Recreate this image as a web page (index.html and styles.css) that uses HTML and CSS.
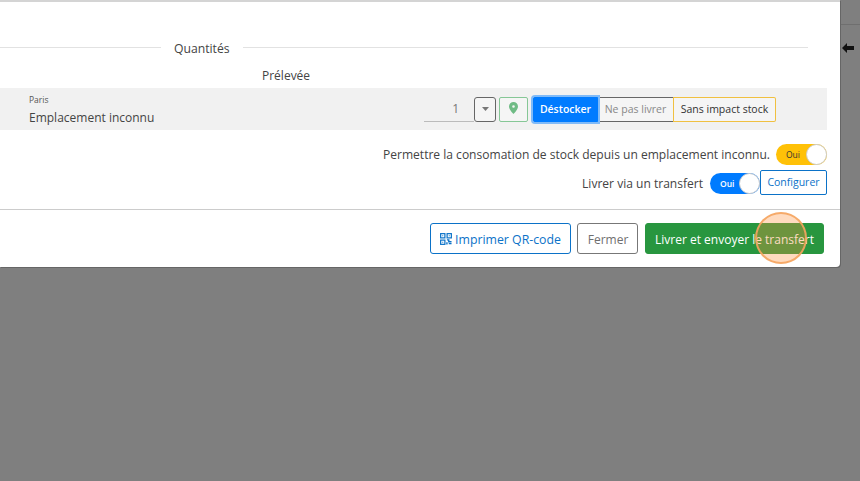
FILE: index.html
```html
<!DOCTYPE html>
<html lang="fr">
<head>
<meta charset="utf-8">
<title>Quantités</title>
<link rel="stylesheet" href="styles.css">
</head>
<body>
<div class="backdrop">
  <div class="side-band"></div>
  <svg class="back-arrow" width="12" height="10" viewBox="0 0 12 10"><path d="M0 5 5 0v3h7v4H5v3z" fill="#111"/></svg>
  <div class="modal">
    <div class="modal-body">
      <div class="divider"><span class="line short"></span><span class="divider-label">Quantités</span><span class="line"></span></div>
      <div class="col-head">Prélevée</div>
      <div class="stock-row">
        <div class="location">
          <div class="city">Paris</div>
          <div class="place">Emplacement inconnu</div>
        </div>
        <div class="controls">
          <div class="qty">1</div>
          <button class="caret-btn"><svg width="7" height="4" viewBox="0 0 7 4"><path d="M0 0h7L3.500 4z" fill="#777"/></svg></button>
          <button class="pin-btn"><svg width="9" height="12" viewBox="0 0 9 12"><path fill-rule="evenodd" d="M4.500 0A4.500 4.500 0 0 0 0 4.500C0 7.500 4.500 12 4.500 12S9 7.500 9 4.500A4.500 4.500 0 0 0 4.500 0zm0 3.200a1.300 1.300 0 1 1 0 2.600 1.300 1.300 0 0 1 0-2.600z" fill="#6fbb85"/></svg></button>
          <div class="seg">
            <button class="seg-btn seg-on">Déstocker</button>
            <button class="seg-btn seg-mid">Ne pas livrer</button>
            <button class="seg-end">Sans impact stock</button>
          </div>
        </div>
      </div>
      <div class="option option-first">
        <span>Permettre la consomation de stock depuis un emplacement inconnu.</span>
        <span class="toggle toggle-yellow"><span class="toggle-text">Oui</span><span class="knob"></span></span>
      </div>
      <div class="option option-second">
        <span>Livrer via un transfert</span>
        <span class="toggle toggle-blue"><span class="toggle-text">Oui</span><span class="knob"></span></span>
        <button class="config-btn">Configurer</button>
      </div>
    </div>
    <div class="modal-footer">
      <button class="btn btn-qr"><svg width="12" height="12" viewBox="0 0 13 13" fill="none" stroke="#0b72c8" stroke-width="1.300"><rect x=".7" y=".7" width="4.600" height="4.600"/><rect x="7.700" y=".7" width="4.600" height="4.600"/><rect x=".7" y="7.700" width="4.600" height="4.600"/><path d="M2.500 2.500h1v1h-1zM9.500 2.500h1v1h-1zM2.500 9.500h1v1h-1z" fill="#0b72c8" stroke="none"/><path d="M7.500 7.500h2v2h3M7.500 10v2.500M9.500 11.500h3" stroke-width="1.500"/></svg><span>Imprimer QR-code</span></button>
      <button class="btn btn-close">Fermer</button>
      <button class="btn btn-go">Livrer et envoyer le transfert</button>
    </div>
    <div class="click-mark"></div>
  </div>
</div>
</body>
</html>
```
FILE: styles.css
```css
* { box-sizing: border-box; }
html, body { margin: 0; height: 100%; }
body { font-family: "Open Sans", "Noto Sans", sans-serif; font-size: 12px; color: #333; overflow: hidden; }
button { font-family: inherit; padding: 0; margin: 0; cursor: pointer; }
.backdrop { position: relative; width: 860px; height: 481px; background: #7f7f7f; }
.side-band { position: absolute; left: 840px; top: 24px; width: 20px; height: 1px; background: #6f6f6f; }
.back-arrow { position: absolute; left: 842px; top: 43px; }
.modal { position: relative; width: 840px; height: 267px; background: #fff; border-top: 2px solid #d4d4d4; border-radius: 0 0 4px 0; box-shadow: 1px 1px 0 #666; display: flex; flex-direction: column; }
.modal-body { height: 207px; padding-top: 36px; }
.divider { display: flex; align-items: center; gap: 13px; height: 20px; padding-right: 32px; }
.line { flex: 1; height: 1px; background: #e2e2e2; margin-bottom: 2px; }
.line.short { flex: 0 0 161px; }
.divider-label { font-size: 12.200px; font-weight: 500; color: #444; }
.col-head { height: 30px; padding: 5px 0 0 262px; display: flex; align-items: center; font-size: 12px; font-weight: 500; color: #444; }
.stock-row { width: 827px; height: 42px; background: #f1f1f1; display: flex; justify-content: space-between; padding: 0 0 0 29px; }
.location { display: flex; flex-direction: column; gap: 5px; padding-top: 6px; }
.city { font-size: 8.500px; color: #555; line-height: 11px; }
.place { font-size: 12px; line-height: 16px; color: #444; }
.controls { display: flex; align-items: center; padding-right: 51px; }
.qty { width: 50px; height: 26px; border-bottom: 1px solid #bbb; text-align: right; padding-right: 15px; line-height: 26px; font-size: 12px; color: #777; }
.caret-btn { width: 22px; height: 25px; background: #f5f5f5; border: 1px solid #666; border-radius: 3px; display: flex; align-items: center; justify-content: center; }
.pin-btn { width: 29px; height: 25px; margin-left: 3px; padding-bottom: 2px; background: #f5f5f5; border: 1px solid #86c796; border-radius: 2px; display: flex; align-items: center; justify-content: center; }
.seg { display: flex; margin-left: 5px; height: 25px; }
.seg-btn { height: 25px; font-size: 10.500px; background: #f5f5f5; border: 1px solid #666; white-space: nowrap; }
.seg-on { width: 65px; background: #007bff; border-color: #007bff; color: #fff; font-weight: 600; border-radius: 2px 0 0 2px; box-shadow: 0 0 0 2px #7fbaf8; position: relative; }
.seg-mid { width: 75px; border-left: 0; border-right: 0; color: #888; }
.seg-end { width: 103px; height: 25px; font-size: 10.500px; white-space: nowrap; background: #f5f5f5; border: 0; box-shadow: inset 0 0 0 1px #f0c040; color: #333; border-radius: 0 2px 2px 0; }
.option { display: flex; justify-content: flex-end; align-items: center; width: 827px; font-size: 12.060px; color: #444; }
.option-first { height: 22px; margin-top: 13px; gap: 6px; }
.option-second { height: 24px; margin-top: 6px; }
.toggle { position: relative; display: flex; align-items: center; width: 51px; height: 21px; border-radius: 11px; }
.toggle-yellow { background: #ffc107; color: #333; }
.toggle-blue { width: 50px; background: #007bff; color: #fff; margin-left: 7px; }
.toggle-text { font-size: 8.500px; padding-left: 10px; font-weight: 600; }
.toggle-yellow .toggle-text { font-weight: 400; }
.knob { position: absolute; right: 0; top: 0; width: 21px; height: 21px; border-radius: 50%; background: #fff; border: 1px solid #ccc; }
.config-btn { width: 67px; height: 25px; margin-top: -1px; padding-bottom: 1px; background: #fff; border: 1px solid #0b72c8; border-radius: 2px; color: #0b72c8; font-size: 10.500px; }
.modal-footer { height: 58px; border-top: 1px solid #ccc; display: flex; align-items: center; justify-content: flex-end; gap: 6px; padding: 0 16px 1px 0; }
.btn { height: 31px; padding-top: 2px; border-radius: 3px; font-size: 12px; display: flex; align-items: center; justify-content: center; white-space: nowrap; }
.btn-qr { width: 141px; gap: 3px; background: #fff; border: 1px solid #0b72c8; color: #0b72c8; font-size: 12.300px; }
.btn-close { width: 61px; padding-left: 1px; background: #fff; border: 1px solid #777; color: #6f6f6f; }
.btn-go { width: 179px; margin-left: 1px; background: #28963f; border: 1px solid #28963f; color: #fff; font-weight: 500; font-size: 12px; }
.click-mark { position: absolute; left: 755px; top: 210px; width: 52px; height: 52px; border-radius: 50%; background: rgba(255, 145, 60, .33); border: 2px solid rgba(245, 165, 95, .9); }
```
